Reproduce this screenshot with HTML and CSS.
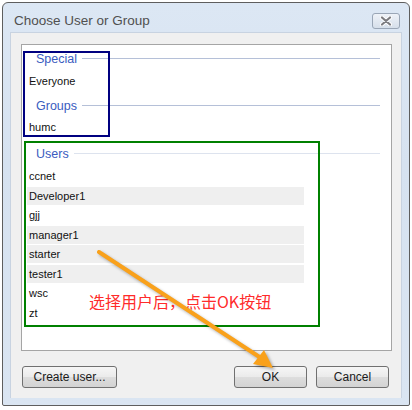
FILE: index.html
```html
<!DOCTYPE html>
<html>
<head>
<meta charset="utf-8">
<link rel="stylesheet" href="styles.css">
</head>
<body>
<div class="window">
  <div class="titlebar">
    <span class="title">Choose User or Group</span>
    <button class="close" aria-label="Close">
      <svg width="14" height="10" viewBox="0 0 14 10"><path d="M3 1.5 L11 8.5 M11 1.5 L3 8.5" stroke="#fff" stroke-width="4" stroke-linecap="round"/><path d="M3 1.5 L11 8.5 M11 1.5 L3 8.5" stroke="#7c7c80" stroke-width="2.2" stroke-linecap="round"/></svg>
    </button>
  </div>
  <div class="client">
    <div class="listbox">
      <div class="group-head first"><span>Special</span><i></i></div>
      <div class="item">Everyone</div>
      <div class="group-head g2"><span>Groups</span><i></i></div>
      <div class="item">humc</div>
      <div class="group-head g3 light"><span>Users</span><i></i></div>
      <div class="item">ccnet</div>
      <div class="item alt">Developer1</div>
      <div class="item">gjj</div>
      <div class="item alt">manager1</div>
      <div class="item alt">starter</div>
      <div class="item alt">tester1</div>
      <div class="item">wsc</div>
      <div class="item">zt</div>
    </div>
    <div class="buttons">
      <button class="btn create">Create user...</button>
      <span class="spacer"></span>
      <button class="btn">OK</button>
      <button class="btn">Cancel</button>
    </div>
  </div>
</div>
<div class="mark blue"></div>
<div class="mark green"></div>
<div class="note">选择用户后，点击OK按钮</div>
<svg class="arrow" width="412" height="410" viewBox="0 0 412 410">
  <line x1="99" y1="252" x2="261" y2="358" stroke="#f9a11b" stroke-width="4" stroke-linecap="round"/>
  <polygon points="273,368 253,364 264,350" fill="#f9a11b"/>
</svg>
</body>
</html>
```
FILE: styles.css
```css
html, body {
  margin: 0;
  padding: 0;
  background: #fff;
  font-family: "Liberation Sans", Arial, sans-serif;
}
body {
  width: 412px;
  height: 410px;
  position: relative;
  overflow: hidden;
}
.window {
  margin: 2px 0 0 2px;
  width: 406px;
  height: 402px;
  border: 1px solid #5e5e5e;
  border-radius: 6px 6px 2px 2px;
  background: linear-gradient(to bottom, #dce7f4 0%, #d6e2f0 40%, #dae5f2 100%);
  display: flex;
  flex-direction: column;
}
.titlebar {
  height: 29px;
  display: flex;
  align-items: center;
  padding: 0 8px 0 11px;
}
.title {
  font-size: 13.5px;
  color: #505050;
  flex: 1;
  padding-top: 6px;
}
.close {
  width: 28px;
  height: 16px;
  margin-right: 1px;
  margin-top: 7px;
  padding: 0;
  border: 1px solid #9aa6b6;
  border-radius: 3px;
  background: linear-gradient(to bottom, #eef2f8, #d6dfea);
  display: flex;
  align-items: center;
  justify-content: center;
}
.client {
  margin: 0 7px 7px 7px;
  flex: 1;
  background: #f0f0f0;
  border: 1px solid #c8d3e1;
  border-bottom: none;
  padding: 11px 9px 0 10px;
  display: flex;
  flex-direction: column;
}
.listbox {
  height: 301px;
  background: #fff;
  border: 1px solid #a5a5a5;
  padding: 4px 11px 0 0;
}
.group-head {
  height: 18px;
  display: flex;
  align-items: center;
  padding-left: 14px;
  font-size: 12.5px;
  color: #3a5cc0;
}
.group-head span { padding-top: 1px; }
.group-head i {
  flex: 1;
  height: 1px;
  background: #b5c0d8;
  margin-left: 5px;
}
.group-head.light i { background: #dde3ee; }
.group-head.g2 { margin-top: 6px; }
.group-head.g3 { margin-top: 8px; }
.item {
  height: 18px;
  line-height: 18px;
  margin: 0 0 1.5px 5px;
  width: 275px;
  padding-left: 2px;
  font-size: 11px;
  color: #111;
}
.group-head + .item { margin-top: 5px; }
.group-head.g2 + .item { margin-top: 4px; }
.item.alt { background: #efefef; }
.buttons {
  display: flex;
  margin-top: 15px;
  padding: 0 3px 0 1px;
  gap: 9px;
}
.spacer { flex: 1; }
.btn {
  height: 22px;
  width: 73px;
  border: 1px solid #707070;
  border-radius: 3px;
  background: linear-gradient(to bottom, #f6f6f6 0%, #ebebeb 48%, #dddddd 52%, #d3d3d3 100%);
  font-family: "Liberation Sans", Arial, sans-serif;
  font-size: 12px;
  color: #1a1a1a;
  padding: 0;
}
.btn.create { width: 95px; }
.mark {
  position: absolute;
  box-sizing: border-box;
}
.mark.blue {
  left: 23px;
  top: 51px;
  width: 87px;
  height: 86px;
  border: 2px solid #000080;
}
.mark.green {
  left: 24px;
  top: 141px;
  width: 296px;
  height: 186px;
  border: 2px solid #008000;
}
.note {
  position: absolute;
  left: 89px;
  top: 291px;
  font-family: "Noto Sans CJK SC", sans-serif;
  font-size: 16px;
  line-height: 20px;
  color: #ff2b2b;
}
.arrow {
  position: absolute;
  left: 0;
  top: 0;
  filter: drop-shadow(2px 2px 1.5px rgba(0,0,0,0.3));
}
```
